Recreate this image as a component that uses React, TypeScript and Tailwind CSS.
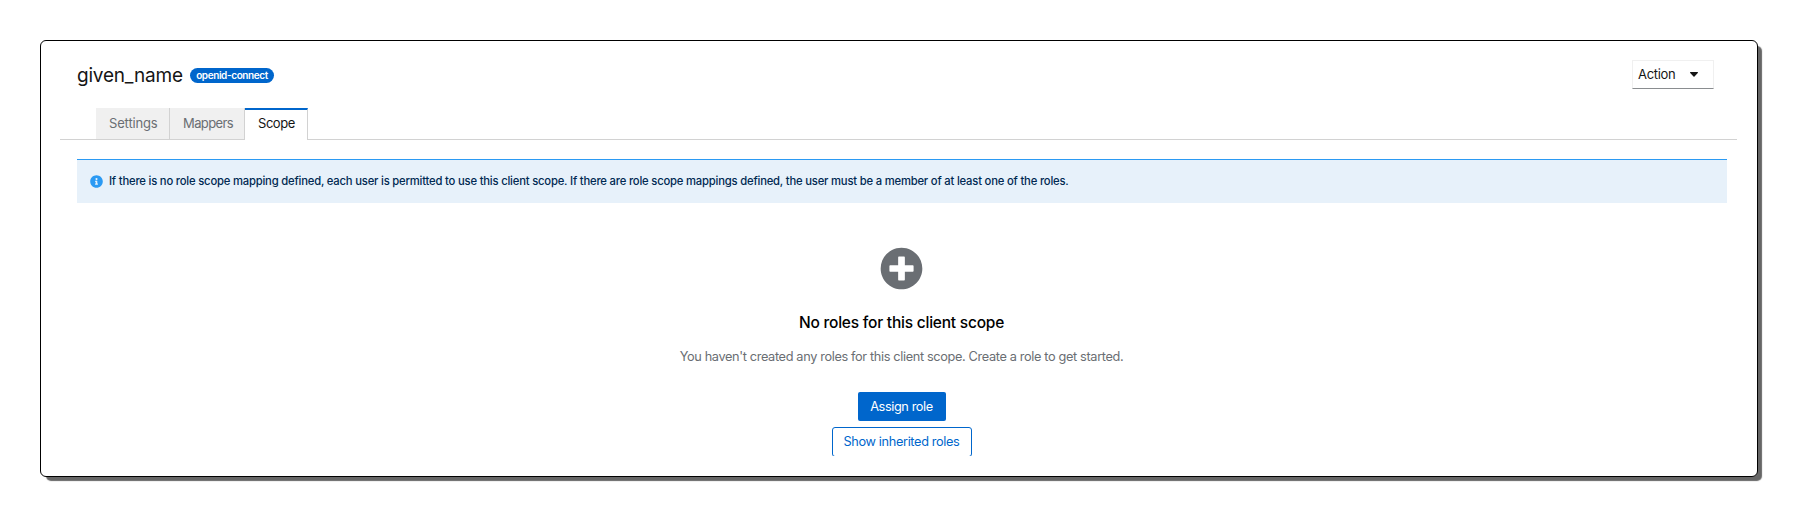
import React from "react";

const tabs = [
  { label: "Settings", box: "w-[74px] pl-[13px] border-r border-[#d2d2d2] bg-[#f0f0f0] text-[#6a6e73]", text: "tracking-[-0.15px]" },
  { label: "Mappers", box: "w-[75px] pl-[13px] border-r border-[#d2d2d2] bg-[#f0f0f0] text-[#6a6e73]", text: "tracking-[-0.6px]" },
  { label: "Scope", box: "w-[63px] pl-[13px] border-r border-[#d2d2d2] border-t-2 border-t-[#0066cc] bg-white text-[#151515] pb-[2px]", text: "tracking-[-0.45px]" },
];

export default function App() {
  return (
    <div className="h-[516px] w-[1797px] overflow-hidden bg-white pt-10 pl-10 font-['Inter','Liberation_Sans',sans-serif] text-[13px] text-[#151515]">
      <main className="flex h-[437px] w-[1718px] flex-col rounded-[6px] border border-black bg-white shadow-[5px_5px_1px_-1px_#666666]">
        <header className="flex h-[67px] items-start justify-between pr-[43px] pl-[36px]">
          <div className="flex items-center pt-[19px]">
            <h1 className="mt-[2px] w-[113px] text-[19px] leading-7 tracking-[-0.2px] whitespace-nowrap">given_name</h1>
            <span className="flex h-[15px] w-[84px] items-center justify-center rounded-full bg-[#0066cc] text-[10px] leading-none font-semibold tracking-[-0.4px] whitespace-nowrap text-white">
              openid-connect
            </span>
          </div>
          <button className="mt-[19px] flex h-[29px] w-[82px] items-center justify-between border border-[#f0f0f0] border-b-[#8a8d90] pr-[15px] pl-[5px]">
            <span className="tracking-[-0.3px]">Action</span>
            <svg className="h-[5px] w-[8px]" viewBox="0 0 8 5" fill="#151515">
              <path d="M.6 0h6.8c.6 0 .8.6.4 1L4.5 4.6a.7.7 0 0 1-1 0L.2 1C-.2.6 0 0 .6 0z" />
            </svg>
          </button>
        </header>

        <nav className="ml-[19px] flex h-[32px] w-[1677px]">
          <div className="w-[36px] border-b border-[#d2d2d2]" />
          {tabs.map((tab) => (
            <button
              key={tab.label}
              className={`flex h-[32px] items-center ${tab.label === "Scope" ? "" : "border-b"} ${tab.box}`}
            >
              <span className={tab.text}>{tab.label}</span>
            </button>
          ))}
          <div className="grow border-b border-[#d2d2d2]" />
        </nav>

        <section className="mt-[19px] ml-[36px] flex h-[44px] w-[1650px] items-center border-t border-[#2b9af3] bg-[#e7f1fa] pb-px pl-[12.5px]">
          <svg className="h-[13px] w-[13px]" viewBox="0 0 512 512" fill="#2b9af3">
            <path d="M256 8C119 8 8 119 8 256s111 248 248 248 248-111 248-248S393 8 256 8zm0 110a42 42 0 1 1 0 84 42 42 0 0 1 0-84zm56 254c0 7-5 12-12 12h-88c-7 0-12-5-12-12v-24c0-7 5-12 12-12h12v-64h-12c-7 0-12-5-12-12v-24c0-7 5-12 12-12h64c7 0 12 5 12 12v100h12c7 0 12 5 12 12v24z" />
          </svg>
          <p className="ml-[6.5px] text-[11.25px] font-medium tracking-[-0.195px] whitespace-nowrap text-[#002952]">
            If there is no role scope mapping defined, each user is permitted to use this client scope. If there are role scope mappings defined, the user must be a member of at least one of the roles.
          </p>
        </section>

        <section className="ml-[36px] flex h-[253px] w-[1649px] flex-col items-center overflow-hidden pt-[44px]">
          <svg className="h-[43px] w-[43px] shrink-0" viewBox="0 0 512 512" fill="#6a6e73">
            <path d="M256 8C119 8 8 119 8 256s111 248 248 248 248-111 248-248S393 8 256 8zm144 276c0 6.600-5.400 12-12 12h-92v92c0 6.600-5.400 12-12 12h-56c-6.600 0-12-5.400-12-12v-92h-92c-6.600 0-12-5.400-12-12v-56c0-6.600 5.400-12 12-12h92v-92c0-6.600 5.400-12 12-12h56c6.600 0 12 5.400 12 12v92h92c6.600 0 12 5.400 12 12v56z" />
          </svg>
          <h2 className="mt-[21px] text-[15.5px] leading-6 font-medium tracking-[-0.22px] text-black">No roles for this client scope</h2>
          <p className="mt-[12px] text-[12.75px] leading-5 tracking-[-0.36px] text-[#6a6e73]">
            You haven't created any roles for this client scope. Create a role to get started.
          </p>
          <button className="mt-[25px] h-[29px] w-[88px] shrink-0 rounded-[2px] bg-[#0066cc] text-[12.75px] tracking-[-0.4px] text-white">Assign role</button>
          <button className="mt-[6px] h-[30px] w-[140px] shrink-0 rounded-[3px] border border-[#0066cc] text-[12.75px] tracking-[-0.36px] whitespace-nowrap text-[#0066cc]">Show inherited roles</button>
        </section>
      </main>
    </div>
  );
}
